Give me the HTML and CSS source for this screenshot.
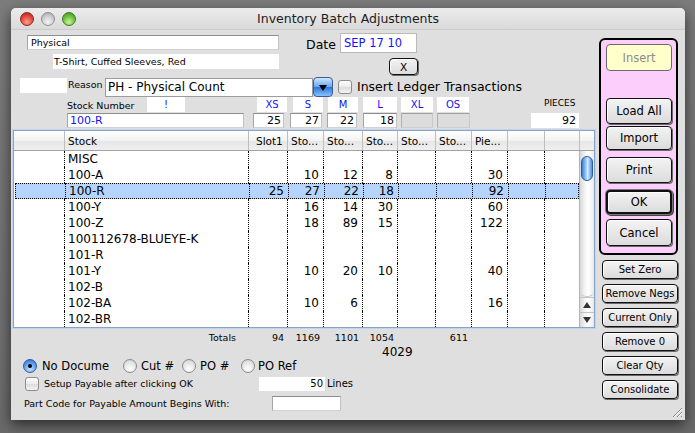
FILE: index.html
```html
<!DOCTYPE html>
<html>
<head>
<meta charset="utf-8">
<title>Inventory Batch Adjustments</title>
<link rel="stylesheet" href="styles.css">
</head>
<body>
<div class="window">
  <div class="titlebar">
    <div class="lights"><span class="light red"></span><span class="light gray"></span><span class="light green"></span></div>
    <div class="title">Inventory Batch Adjustments</div>
    <div></div>
  </div>
  <div class="content">
    <div class="main">
      <div class="row-a">
        <div class="desc-col">
          <div class="field physical">Physical</div>
          <div class="desc">T-Shirt, Cuffed Sleeves, Red</div>
        </div>
        <div class="date-col">
          <div class="date-row"><span class="date-label">Date</span><div class="field date">SEP 17 10</div></div>
          <div class="btn xbtn">X</div>
        </div>
      </div>
      <div class="row-b">
        <div class="reason-white"></div>
        <div class="reason-label">Reason</div>
        <div class="select">PH - Physical Count</div>
        <div class="dd"></div>
        <div class="check ins-check"></div>
        <div class="ins-label">Insert Ledger Transactions</div>
      </div>
      <div class="row-c">
        <div class="stock-label">Stock Number</div>
        <div class="hbox bang">!</div>
        <div class="hbox h-xs">XS</div>
        <div class="hbox h-s">S</div>
        <div class="hbox h-m">M</div>
        <div class="hbox h-l">L</div>
        <div class="hbox h-xl">XL</div>
        <div class="hbox h-os">OS</div>
        <div class="pieces-label">PIECES</div>
      </div>
      <div class="row-d">
        <div class="field stock-field">100-R</div>
        <div class="field qty q1">25</div>
        <div class="field qty q2">27</div>
        <div class="field qty q3">22</div>
        <div class="field qty q4">18</div>
        <div class="field qty q5 off"></div>
        <div class="field qty q6 off"></div>
        <div class="pieces-field">92</div>
      </div>
      <div class="table">
        <div class="th">
          <span></span><span>Stock</span><span class="slot">Slot1</span><span>Sto...</span><span>Sto...</span><span>Sto...</span><span>Sto...</span><span>Sto...</span><span>Pie...</span><span></span><span></span><span></span>
        </div>
        <div class="tbody">
          <div class="rows">
            <div class="tr"><span></span><span>MISC</span><span></span><span></span><span></span><span></span><span></span><span></span><span></span><span></span><span></span></div>
            <div class="tr"><span></span><span>100-A</span><span></span><span>10</span><span>12</span><span>8</span><span></span><span></span><span>30</span><span></span><span></span></div>
            <div class="tr sel"><span></span><span>100-R</span><span>25</span><span>27</span><span>22</span><span>18</span><span></span><span></span><span>92</span><span></span><span></span></div>
            <div class="tr"><span></span><span>100-Y</span><span></span><span>16</span><span>14</span><span>30</span><span></span><span></span><span>60</span><span></span><span></span></div>
            <div class="tr"><span></span><span>100-Z</span><span></span><span>18</span><span>89</span><span>15</span><span></span><span></span><span>122</span><span></span><span></span></div>
            <div class="tr"><span></span><span>100112678-BLUEYE-K</span><span></span><span></span><span></span><span></span><span></span><span></span><span></span><span></span><span></span></div>
            <div class="tr"><span></span><span>101-R</span><span></span><span></span><span></span><span></span><span></span><span></span><span></span><span></span><span></span></div>
            <div class="tr"><span></span><span>101-Y</span><span></span><span>10</span><span>20</span><span>10</span><span></span><span></span><span>40</span><span></span><span></span></div>
            <div class="tr"><span></span><span>102-B</span><span></span><span></span><span></span><span></span><span></span><span></span><span></span><span></span><span></span></div>
            <div class="tr"><span></span><span>102-BA</span><span></span><span>10</span><span>6</span><span></span><span></span><span></span><span>16</span><span></span><span></span></div>
            <div class="tr"><span></span><span>102-BR</span><span></span><span></span><span></span><span></span><span></span><span></span><span></span><span></span><span></span></div>
          </div>
          <div class="vscroll">
            <div class="thumb"></div>
            <div class="track"></div>
            <div class="arrow up"></div>
            <div class="arrow down"></div>
          </div>
        </div>
      </div>
      <div class="totals">
        <span class="tot-label">Totals</span><span>94</span><span>1169</span><span>1101</span><span>1054</span><span></span><span>611</span><span></span><span></span><span></span>
      </div>
      <div class="grand">4029</div>
      <div class="radio-row">
        <span class="radio on"></span><span class="rlabel r1">No Docume</span>
        <span class="radio"></span><span class="rlabel r2">Cut #</span>
        <span class="radio"></span><span class="rlabel r3">PO #</span>
        <span class="radio"></span><span class="rlabel r4">PO Ref</span>
      </div>
      <div class="setup-row">
        <span class="check"></span>
        <span class="setup-label">Setup Payable after clicking OK</span>
        <span class="lines-box">50</span>
        <span class="lines-label">Lines</span>
      </div>
      <div class="part-row">
        <span class="part-label">Part Code for Payable Amount Begins With:</span>
        <span class="field part-field"></span>
      </div>
    </div>
    <div class="side">
      <div class="panel">
        <div class="btn insert">Insert</div>
        <div class="btn big b-load">Load All</div>
        <div class="btn big b-import">Import</div>
        <div class="btn big b-print">Print</div>
        <div class="btn big b-ok">OK</div>
        <div class="btn big b-cancel">Cancel</div>
      </div>
      <div class="small-btns">
        <div class="btn small">Set Zero</div>
        <div class="btn small">Remove Negs</div>
        <div class="btn small">Current Only</div>
        <div class="btn small">Remove 0</div>
        <div class="btn small">Clear Qty</div>
        <div class="btn small">Consolidate</div>
      </div>
    </div>
  </div>
  <svg class="grip" width="12" height="12" viewBox="0 0 12 12">
    <path d="M11 2 L2 11 M11 6 L6 11 M11 10 L10 11" stroke="#8a8a8a" stroke-width="1"/>
    <path d="M11 3 L3 11 M11 7 L7 11" stroke="#fff" stroke-width="1"/>
  </svg>
</div>
</body>
</html>
```
FILE: styles.css
```css
* { box-sizing: border-box; margin: 0; padding: 0; }
html, body { height: 100%; }
body {
  background: linear-gradient(#7c7c7c, #6a6a6a);
  font-family: "DejaVu Sans", "Liberation Sans", sans-serif;
  color: #000;
  padding: 8px 10px 0 11px;
  overflow: hidden;
}
.window {
  width: 674px;
  height: 412px;
  background: #dfdfdf;
  border-radius: 5px 5px 0 0;
  box-shadow: 0 5px 14px rgba(0,0,0,.6);
  display: flex;
  flex-direction: column;
  position: relative;
}
.titlebar {
  height: 22px;
  display: grid;
  grid-template-columns: 1fr auto 1fr;
  align-items: center;
  background: linear-gradient(#ececec, #dadada);
  border-radius: 5px 5px 0 0;
  border-bottom: 1px solid #cbcbcb;
}
.lights { display: flex; gap: 7px; padding-left: 9px; }
.light { width: 14px; height: 14px; border-radius: 50%; }
.light.red { background: radial-gradient(circle at 50% 75%, #ff9f8f, #e0473a 55%, #a8201a); border: 1px solid #8a2a22; }
.light.gray { background: radial-gradient(circle at 50% 75%, #f4f4f4, #cdcdcd 55%, #9f9f9f); border: 1px solid #8e8e8e; }
.light.green { background: radial-gradient(circle at 50% 75%, #c9f59c, #6cbf3a 55%, #3f8a1d); border: 1px solid #3e7a25; }
.title { font-size: 12.5px; color: #1c1c1c; }

.content { display: flex; flex: 1; }
.main { width: 588px; }
.side { width: 86px; }

.field {
  background: #fff;
  border: 1px solid;
  border-color: #8d8d8d #c2c2c2 #d2d2d2 #a6a6a6;
  height: 15px;
}

.row-a { display: flex; padding-top: 3px; }
.desc-col { margin-left: 16px; padding-top: 2px; }
.physical { width: 252px; font-size: 9.5px; line-height: 13px; padding-left: 3px; }
.desc { margin-top: 4px; margin-left: 26px; width: 226px; height: 15px; background: #fff; font-size: 9.5px; line-height: 15px; padding-left: 1px; }
.date-col { margin-left: 27px; display: flex; flex-direction: column; align-items: flex-end; }
.date-row { display: flex; align-items: center; }
.date-label { width: 34px; font-size: 12.5px; padding-top: 3px; }
.date { width: 77px; height: 20px; color: #1414f0; font-size: 11.5px; line-height: 18px; padding-left: 3px; border-color: #b9b9b9; }

.btn {
  background: linear-gradient(#f3f3f3, #dcdcdc);
  border: 1px solid #111;
  border-radius: 4px;
  box-shadow: 1px 1px 0 #6a6a6a, inset 1px 1px 0 #fff;
  display: flex;
  align-items: center;
  justify-content: center;
  color: #000;
}
.xbtn { width: 29px; height: 17px; margin-top: 5px; margin-right: -1px; font-size: 10.5px; }

.row-b { display: flex; align-items: flex-start; height: 20px; margin-top: 2px; }
.reason-white { margin-left: 9px; margin-top: 1px; width: 47px; height: 15px; background: #fff; }
.reason-label { margin-left: 1px; width: 37px; font-size: 9.5px; line-height: 16px; }
.select { width: 208px; height: 19px; margin-top: 1px; background: #fff; border: 1px solid #9c9c9c; font-size: 12px; line-height: 17px; padding-left: 2px; }
.dd {
  width: 20px; height: 20px; border-radius: 4px;
  border: 1px solid #3a5c90;
  background: linear-gradient(#cfe5ff, #6aa8f0 48%, #2f74dc 52%, #86c4ff);
  display: flex; align-items: center; justify-content: center;
}
.dd::after { content: ""; border-left: 4px solid transparent; border-right: 4px solid transparent; border-top: 6px solid #000; margin-top: 1px; }
.check {
  width: 14px; height: 14px; border: 1px solid #8c8c8c; border-radius: 3px;
  background: linear-gradient(#fdfdfd, #ebebeb 50%, #dcdcdc 51%, #f3f3f3);
  display: inline-block;
}
.ins-check { margin-left: 5px; margin-top: 3px; }
.ins-label { margin-left: 5px; font-size: 12.5px; line-height: 20px; }

.row-c { display: flex; height: 15px; }
.stock-label { margin-left: 56px; width: 80px; font-size: 9.5px; line-height: 18px; }
.hbox { background: #fff; height: 15px; color: #1414f0; font-size: 10px; line-height: 15px; text-align: center; }
.bang { width: 38px; }
.h-xs { margin-left: 72px; width: 30px; }
.h-s { margin-left: 6px; width: 30px; }
.h-m { margin-left: 5px; width: 30px; }
.h-l { margin-left: 5px; width: 34px; }
.h-xl { margin-left: 4px; width: 32px; }
.h-os { margin-left: 4px; width: 32px; }
.pieces-label { margin-left: 75px; font-size: 9px; line-height: 13px; }

.row-d { display: flex; height: 15px; margin-top: 1px; }
.stock-field { margin-left: 56px; width: 177px; color: #1414f0; font-size: 11px; line-height: 13px; padding-left: 2px; }
.qty { font-size: 11px; line-height: 13px; text-align: right; padding-right: 2px; }
.q1 { margin-left: 9px; width: 31px; }
.q2 { margin-left: 6px; width: 32px; }
.q3 { margin-left: 5px; width: 30px; }
.q4 { margin-left: 6px; width: 34px; }
.q5 { margin-left: 4px; width: 32px; }
.q6 { margin-left: 4px; width: 33px; }
.qty.off { background: #dcdcdc; border-color: #a0a0a0 #c8c8c8 #cfcfcf #b0b0b0; }
.pieces-field { margin-left: 61px; width: 48px; height: 15px; background: #fff; font-size: 11px; line-height: 15px; text-align: right; padding-right: 3px; }

.table {
  margin-top: 2px; margin-left: 2px;
  width: 582px; height: 198px;
  border: 1px solid #86a3c9;
  box-shadow: 0 0 0 1px #c3d4ea;
  background: #fff;
}
.th {
  display: grid;
  grid-template-columns: 50px 184px 39px 36px 39px 35px 38px 36px 36px 37px 35px 15px;
  height: 20px;
  background: linear-gradient(#ffffff, #f3f3f3 50%, #e6e6e6 52%, #efefef);
  border-bottom: 1px solid #a2a2a2;
  font-size: 10.5px;
  line-height: 20px;
}
.th span { border-left: 1px solid #bdbdbd; padding-left: 3px; white-space: nowrap; overflow: hidden; }
.th span:first-child { border-left: none; }
.th .slot { padding-left: 7px; }
.tbody { display: flex; height: 176px; }
.rows { width: 565px; }
.tr {
  display: grid;
  grid-template-columns: 50px 184px 39px 36px 39px 35px 38px 36px 36px 37px 35px;
  height: 16px;
  font-size: 12px;
  line-height: 16px;
}
.tr span { border-left: 1px dotted #000; text-align: right; padding-right: 4px; white-space: nowrap; overflow: hidden; }
.tr span:first-child { border-left: none; }
.tr span:nth-child(2) { text-align: left; padding-left: 3px; }
.tr.sel { background: #b5d5ff; outline: 1px dotted #000; outline-offset: -1px; margin-left: 1px; width: 564px; }
.tr.sel span:first-child { width: 49px; }

.vscroll {
  width: 15px;
  border-left: 1px solid #b3b3b3;
  background: linear-gradient(90deg, #d8d8d8, #f4f4f4 35%, #ffffff 60%, #e9e9e9);
  display: flex;
  flex-direction: column;
}
.thumb {
  margin: 5px 1px 0 1px;
  height: 25px;
  border-radius: 6px;
  border: 1px solid #2d5a9a;
  background: linear-gradient(90deg, #3c7fd4, #a9d3ff 45%, #d9ecff 55%, #4d8fe0);
}
.track { flex: 1; border-bottom: 1px solid #c9c9c9; border-radius: 0 0 6px 6px; }
.arrow { height: 15px; display: flex; align-items: center; justify-content: center; border-top: 1px solid #c4c4c4; }
.arrow.up::after { content: ""; border-left: 4px solid transparent; border-right: 4px solid transparent; border-bottom: 6px solid #333; }
.arrow.down::after { content: ""; border-left: 4px solid transparent; border-right: 4px solid transparent; border-top: 6px solid #333; }

.totals {
  display: grid;
  grid-template-columns: 234px 39px 36px 39px 35px 38px 36px 36px 37px 35px;
  margin-left: 3px;
  margin-top: 3px;
  height: 13px;
  font-size: 9.5px;
  line-height: 13px;
}
.totals span { text-align: right; padding-right: 3px; }
.totals .tot-label { padding-right: 12px; }
.grand { margin-left: 371px; height: 12px; font-size: 12px; line-height: 12px; margin-top: 2px; }

.radio-row { display: flex; align-items: center; height: 15px; margin-top: 0; }
.radio {
  width: 14px; height: 14px; border-radius: 50%;
  border: 1px solid #8a8a8a;
  background: radial-gradient(circle at 50% 75%, #ffffff, #e4e4e4 60%, #c9c9c9);
  display: flex; align-items: center; justify-content: center;
}
.radio-row .radio:first-child { margin-left: 12px; }
.radio.on { border-color: #2f5c9c; background: radial-gradient(circle at 50% 75%, #c8e4ff, #5c9ff0 55%, #2b6bcb); }
.radio.on::after { content: ""; width: 4px; height: 4px; border-radius: 50%; background: #000; }
.rlabel { font-size: 11.5px; margin-left: 5px; }
.r1 { width: 81px; }
.r2 { width: 41px; margin-left: 4px; }
.r3 { width: 41px; margin-left: 4px; }
.r4 { margin-left: 3px; }

.setup-row { display: flex; align-items: center; height: 15px; margin-top: 3px; }
.setup-row .check { margin-left: 14px; }
.setup-label { margin-left: 5px; width: 215px; font-size: 9.5px; }
.lines-box { width: 66px; height: 14px; background: #fff; font-size: 10px; line-height: 14px; text-align: right; padding-right: 2px; }
.lines-label { margin-left: 2px; font-size: 10px; }

.part-row { display: flex; align-items: center; height: 15px; margin-top: 5px; }
.part-label { margin-left: 13px; width: 248px; font-size: 9.5px; }
.part-field { width: 69px; height: 15px; }

.panel {
  margin-top: 8px;
  width: 79px; height: 217px;
  border: 2px solid #000;
  border-radius: 6px;
  background: #fccefc;
  padding: 4px 0 0 5px;
  display: flex; flex-direction: column;
}
.panel .btn { width: 66px; }
.insert { height: 27px; background: #ffffcc; color: #8c8c8c; border-color: #6a6a6a; box-shadow: none; font-size: 11.5px; }
.big { font-size: 11.5px; }
.b-load { margin-top: 27px; height: 26px; }
.b-import { margin-top: 2px; height: 24px; }
.b-print { margin-top: 7px; height: 26px; }
.b-ok { margin-top: 7px; height: 24px; border: 2px solid #111; box-shadow: 0 0 0 1px #777, 1px 1px 0 1px #444, inset 1px 1px 0 #fff; }
.b-cancel { margin-top: 5px; height: 27px; }

.small-btns { margin-left: 3px; margin-top: 5px; display: flex; flex-direction: column; gap: 5px; }
.small { width: 76px; height: 19px; font-size: 10px; }

.grip { position: absolute; right: 2px; bottom: 2px; }
```
